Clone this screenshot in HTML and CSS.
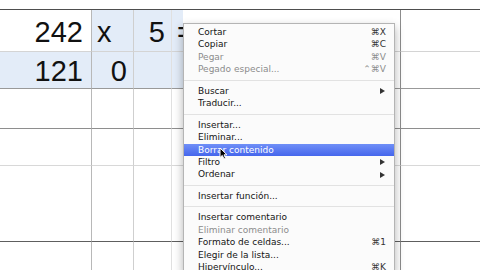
FILE: index.html
```html
<!DOCTYPE html>
<html>
<head>
<meta charset="UTF-8">
<title>Hoja de cálculo - menú contextual</title>
<link rel="stylesheet" href="styles.css">
</head>
<body>
<div class="sheet">
  <!-- fila superior -->
  <div class="cell top c1"></div><div class="cell top c2"></div><div class="cell top c3"></div><div class="cell top c4"></div><div class="cell top c5"></div><div class="cell top c6"></div>

  <!-- fila 1 -->
  <div class="cell r1 c1 num pad1">242</div>
  <div class="cell r1 c2 sel txt">x</div>
  <div class="cell r1 c3 sel num">5</div>
  <div class="cell r1 c4 sel txt">=</div>
  <div class="cell r1 c5"></div>
  <div class="cell r1 c6"></div>

  <!-- fila 2 -->
  <div class="cell r2 c1 sel num pad1">121</div>
  <div class="cell r2 c2 sel num">0</div>
  <div class="cell r2 c3 sel"></div>
  <div class="cell r2 c4 sel"></div>
  <div class="cell r2 c5"></div>
  <div class="cell r2 c6"></div>

  <div class="cell r3 c1"></div><div class="cell r3 c2"></div><div class="cell r3 c3"></div><div class="cell r3 c4"></div><div class="cell r3 c5"></div><div class="cell r3 c6"></div>
  <div class="cell r4 c1"></div><div class="cell r4 c2"></div><div class="cell r4 c3"></div><div class="cell r4 c4"></div><div class="cell r4 c5"></div><div class="cell r4 c6"></div>
  <div class="cell r5 c1"></div><div class="cell r5 c2"></div><div class="cell r5 c3"></div><div class="cell r5 c4"></div><div class="cell r5 c5"></div><div class="cell r5 c6"></div>
  <div class="cell r6 c1"></div><div class="cell r6 c2"></div><div class="cell r6 c3"></div><div class="cell r6 c4"></div><div class="cell r6 c5"></div><div class="cell r6 c6"></div>
</div>

<div class="menu">
  <div class="item"><span>Cortar</span><span class="key">⌘X</span></div>
  <div class="item"><span>Copiar</span><span class="key">⌘C</span></div>
  <div class="item off"><span>Pegar</span><span class="key">⌘V</span></div>
  <div class="item off"><span>Pegado especial...</span><span class="key">⌃⌘V</span></div>
  <div class="sep"></div>
  <div class="item"><span>Buscar</span><span class="arrow"></span></div>
  <div class="item"><span>Traducir...</span></div>
  <div class="sep"></div>
  <div class="item"><span>Insertar...</span></div>
  <div class="item"><span>Eliminar...</span></div>
  <div class="item active"><span>Borrar contenido</span></div>
  <div class="item"><span>Filtro</span><span class="arrow"></span></div>
  <div class="item"><span>Ordenar</span><span class="arrow"></span></div>
  <div class="sep"></div>
  <div class="item"><span>Insertar función...</span></div>
  <div class="sep"></div>
  <div class="item"><span>Insertar comentario</span></div>
  <div class="item off"><span>Eliminar comentario</span></div>
  <div class="item"><span>Formato de celdas...</span><span class="key">⌘1</span></div>
  <div class="item"><span>Elegir de la lista...</span></div>
  <div class="item"><span>Hipervínculo...</span><span class="key">⌘K</span></div>
</div>

<svg class="cursor" width="9" height="13" viewBox="0 0 9 13">
  <path d="M1 1 L1 10.5 L3.3 8.4 L5 12 L6.6 11.3 L5 7.8 L8 7.8 Z" fill="#000" stroke="#fff" stroke-width="1"/>
</svg>
</body>
</html>
```

FILE: styles.css
```css
body {
  margin: 0;
  width: 480px;
  height: 270px;
  overflow: hidden;
  background: #fff;
  position: relative;
}

.sheet {
  display: grid;
  grid-template-columns: 92px 42px 38px 11px 218px 79px;
  grid-template-rows: 10px 42px 37px 40px 37px 76px 28px;
  font-family: "Liberation Sans", Arial, sans-serif;
  font-size: 29px;
  line-height: 1;
  color: #111;
}

.cell {
  box-sizing: border-box;
  display: flex;
  align-items: flex-end;
  border-bottom: 1px solid #d4d4d4;
}

.c1 { border-right: 1px solid #b8b8b8; }
.c2 { border-right: 1px solid #cfcfcf; }
.c3 { border-right: 1px solid #e0e0e0; }
.c5 { border-right: 1px solid #8c8c8c; }

.top { border-bottom: 1px solid #4e4e4e; border-right: none; }
.r1 { padding-bottom: 4px; }
.r2 { padding-bottom: 2px; border-bottom-color: #999; }
.r3 { border-bottom-color: #8e8e8e; }
.r4 { border-bottom-color: #d8d8d8; }
.r5 { border-bottom-color: #5e5e5e; }
.r6 { border-bottom: none; }

.sel { background: #e3ecf8; }

.num {
  justify-content: flex-end;
  padding-right: 6px;
}
.num.pad1 { padding-right: 8px; }

.txt {
  padding-left: 5px;
  overflow: visible;
  white-space: nowrap;
}

/* menu contextual */
.menu {
  position: absolute;
  left: 183px;
  top: 23px;
  width: 212px;
  box-sizing: border-box;
  padding-top: 2px;
  background: #fbfbfb;
  border: 1px solid #b4b4b4;
  border-bottom: none;
  box-shadow: 0 4px 9px rgba(0, 0, 0, 0.3);
  font-family: "DejaVu Sans", "Lucida Grande", sans-serif;
  font-size: 9px;
  color: #141414;
}

.item {
  height: 12.45px;
  line-height: 12.45px;
  padding: 0 8px 0 14px;
  display: flex;
  justify-content: space-between;
  align-items: center;
  white-space: nowrap;
}

.item.off { color: #8c8c8c; }

.item.active {
  background: linear-gradient(#6f8ff7, #4566ec);
  color: #fff;
}

.key { color: #333; }
.off .key { color: #8c8c8c; }

.arrow {
  width: 0;
  height: 0;
  margin-right: 1px;
  border-left: 5px solid #333;
  border-top: 3.5px solid transparent;
  border-bottom: 3.5px solid transparent;
}

.sep {
  height: 9px;
  display: flex;
  align-items: center;
}
.sep::before {
  content: "";
  flex: 1;
  height: 1px;
  background: #e2e2e2;
}

.cursor {
  position: absolute;
  left: 219px;
  top: 147px;
}
```
